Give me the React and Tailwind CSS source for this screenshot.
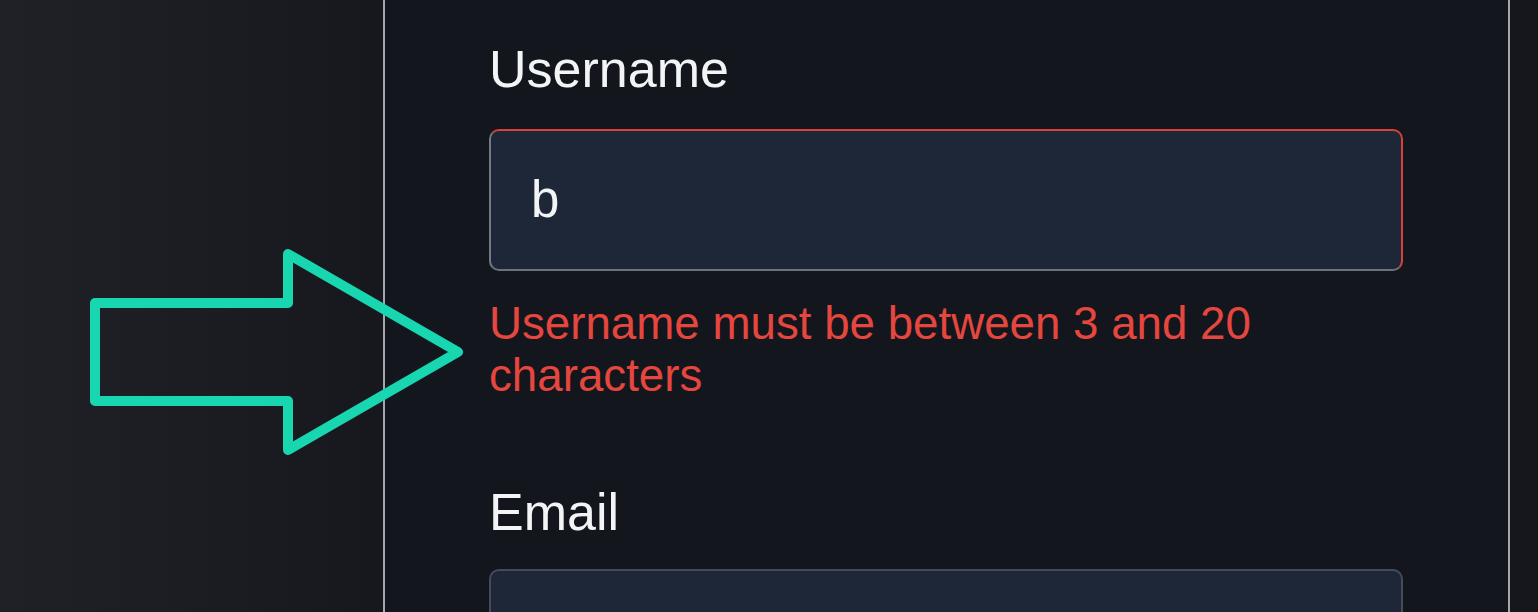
export default function App() {
  return (
    <div
      className="relative flex h-[612px] w-full overflow-hidden bg-[#15171c]"
      style={{ fontFamily: '"Liberation Sans", Arial, sans-serif' }}
    >
      <div className="h-full w-[383px] shrink-0 bg-gradient-to-r from-[#1f2127] via-[#1b1d23] to-[#16181d]" />
      <div className="h-full w-[1127px] shrink-0 border-x-2 border-[#a3a7af] bg-[#13161d] pl-[104px] pt-[39px]">
        <div className="w-[914px]">
          <label className="block text-[52px] leading-[60px] text-[#f3f4f6]">Username</label>
          <div className="mt-[30px] flex h-[142px] items-center rounded-[10px] border-2 border-t-[#d9403a] border-r-[#d9403a] border-l-[#737985] border-b-[#6b717d] bg-[#1e2738] pl-[40px] text-[51px] text-[#f3f4f6]">
            b
          </div>
          <p className="mt-[27px] text-[45.7px] leading-[52px] text-[#e5463e]">
            Username must be between 3 and 20 characters
          </p>
          <label className="mt-[80px] block text-[52px] leading-[60px] text-[#f3f4f6]">Email</label>
          <div className="mt-[27px] h-[142px] rounded-[10px] border-2 border-[#454b58] bg-[#1e2738]" />
        </div>
      </div>
      <div className="h-full flex-1 bg-[#15171c]" />
      <svg
        className="pointer-events-none absolute left-0 top-0"
        width="1538"
        height="612"
        viewBox="0 0 1538 612"
      >
        <polygon
          points="95,303 288,303 288,254 458,352 288,450 288,401 95,401"
          fill="none"
          stroke="#17d6b0"
          strokeWidth="10"
          strokeLinejoin="round"
        />
      </svg>
    </div>
  );
}
